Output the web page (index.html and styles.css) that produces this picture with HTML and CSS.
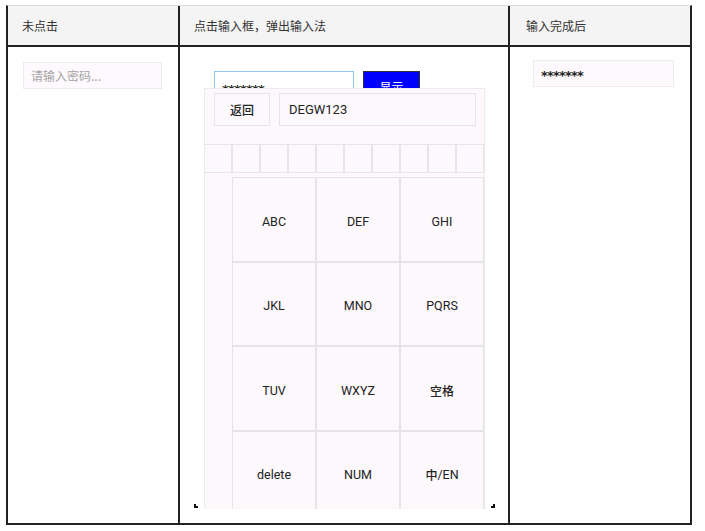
FILE: index.html
```html
<!DOCTYPE html>
<html lang="zh">
<head>
<meta charset="utf-8">
<link rel="stylesheet" href="styles.css">
</head>
<body>
<div class="table">
  <div class="th">未点击</div>
  <div class="th">点击输入框，弹出输入法</div>
  <div class="th last">输入完成后</div>

  <div class="td">
    <div class="input placeholder">请输入密码...</div>
  </div>
  <div class="td demo">
    <div class="demo-row">
      <div class="input focus">*******</div>
      <div class="btn-show">显示</div>
    </div>
    <div class="kb">
      <div class="kb-top">
        <div class="kb-back">返回</div>
        <div class="kb-text">DEGW123</div>
      </div>
      <div class="kb-cands">
        <span></span><span></span><span></span><span></span><span></span>
        <span></span><span></span><span></span><span></span><span></span>
      </div>
      <div class="kb-body">
        <div class="kb-side"></div>
        <div class="kb-keys">
          <div class="key">ABC</div><div class="key">DEF</div><div class="key">GHI</div>
          <div class="key">JKL</div><div class="key">MNO</div><div class="key">PQRS</div>
          <div class="key">TUV</div><div class="key">WXYZ</div><div class="key cjk">空格</div>
          <div class="key">delete</div><div class="key">NUM</div><div class="key"><b class="zh">中</b>/EN</div>
        </div>
      </div>
    </div>
    <i class="corner cl"></i><i class="corner cr"></i>
  </div>
  <div class="td last">
    <div class="input done">*******</div>
  </div>
</div>
</body>
</html>
```

FILE: styles.css
```css
* { box-sizing: border-box; }
html, body { margin: 0; padding: 0; background: #fff; }
body {
  font-family: "Noto Sans CJK SC", "Noto Sans", sans-serif;
  font-size: 12px;
  color: #333;
}
.table {
  margin: 5px 0 0 6px;
  width: 686px;
  display: grid;
  grid-template-columns: 172px 330px 180px;
  grid-template-rows: 41px 476px;
  border-top: 1px solid #dcdcdc;
  border-left: 2px solid #222;
  border-right: 2px solid #222;
  border-bottom: 2px solid #222;
}
.th {
  background: #f4f4f4;
  border-right: 2px solid #222;
  border-bottom: 2px solid #222;
  display: flex;
  align-items: center;
  padding-left: 14px;
  font-size: 12px;
  color: #333;
  padding-bottom: 1px;
}
.th.last { border-right: none; padding-left: 16px; }
.td {
  border-right: 2px solid #222;
  position: relative;
}
.td.last { border-right: none; }
.td:first-child, .td:nth-child(4) { padding: 15px 0 0 15px; }
.td:nth-child(4) .input { width: 139px; height: 27px; }
.input {
  background: #fdf9fd;
  border: 1px solid #ececec;
  display: flex;
  align-items: center;
  padding-left: 7px;
  font-size: 12px;
}
.placeholder { color: #a5a5a5; }
.td.last { padding: 13px 0 0 23px; }
.done, .focus {
  font-family: "DejaVu Sans", sans-serif;
  font-size: 13px;
  font-weight: bold;
  color: #222;
  letter-spacing: -0.8px;
}
.done { width: 141px; height: 27px; padding-top: 4px; }

.demo { padding: 24px 0 0 34px; }
.demo-row { display: flex; gap: 9px; }
.focus {
  width: 140px; height: 30px;
  border: 1px solid #8fc8ef;
  background: #fff;
  padding-top: 6px;
}
.btn-show {
  width: 57px; height: 30px;
  background: #0000ff;
  border: 1px solid #333;
  color: #fff;
  display: flex; align-items: center; justify-content: center;
  font-size: 12px;
}
.kb {
  position: absolute;
  left: 24px; top: 41px;
  width: 281px; height: 421px;
  background: #fcf8fc;
  border: 1px solid #ececec;
  border-bottom: none;
  overflow: hidden;
  display: flex; flex-direction: column;
}
.kb-top {
  flex: none;
  display: flex; gap: 9px;
  padding: 4px 8px 0 9px;
  height: 55px;
}
.kb-back, .kb-text {
  height: 33px;
  border: 1px solid #e6e4e6;
  display: flex; align-items: center;
  font-size: 12px; color: #222;
}
.kb-back { width: 56px; justify-content: center; font-weight: 500; }
.kb-text { flex: 1; padding-left: 9px; font-family: "Roboto", sans-serif; font-size: 13px; }
.kb-cands {
  flex: none;
  display: grid;
  grid-template-columns: repeat(10, 1fr);
  height: 29px;
  margin-left: -1px;
  border-bottom: 1px solid #e6e4e6;
}
.kb-cands span { border: 1px solid #e6e4e6; border-bottom: none; }
.kb-body { flex: none; display: flex; padding-top: 4px; }
.kb-side { width: 27px; flex: none; }
.kb-keys {
  flex: 1;
  display: grid;
  grid-template-columns: repeat(3, 1fr);
  grid-auto-rows: 84.5px;
}
.key {
  border: 1px solid #e6e4e6;
  display: flex; align-items: center; justify-content: center;
  padding-top: 4px;
  font-family: "Roboto", sans-serif; font-size: 12.5px; color: #222;
}
.key.cjk { font-family: "Noto Sans CJK SC", sans-serif; font-weight: 500; font-size: 12px; }
.zh { font-family: "Noto Sans CJK SC", sans-serif; font-weight: 500; font-size: 12px; }
.corner {
  position: absolute;
  width: 4px; height: 4px;
  top: 457px;
  border-bottom: 2px solid #111;
}
.cl { left: 14px; border-left: 2px solid #111; }
.cr { left: 311px; border-right: 2px solid #111; }
```
